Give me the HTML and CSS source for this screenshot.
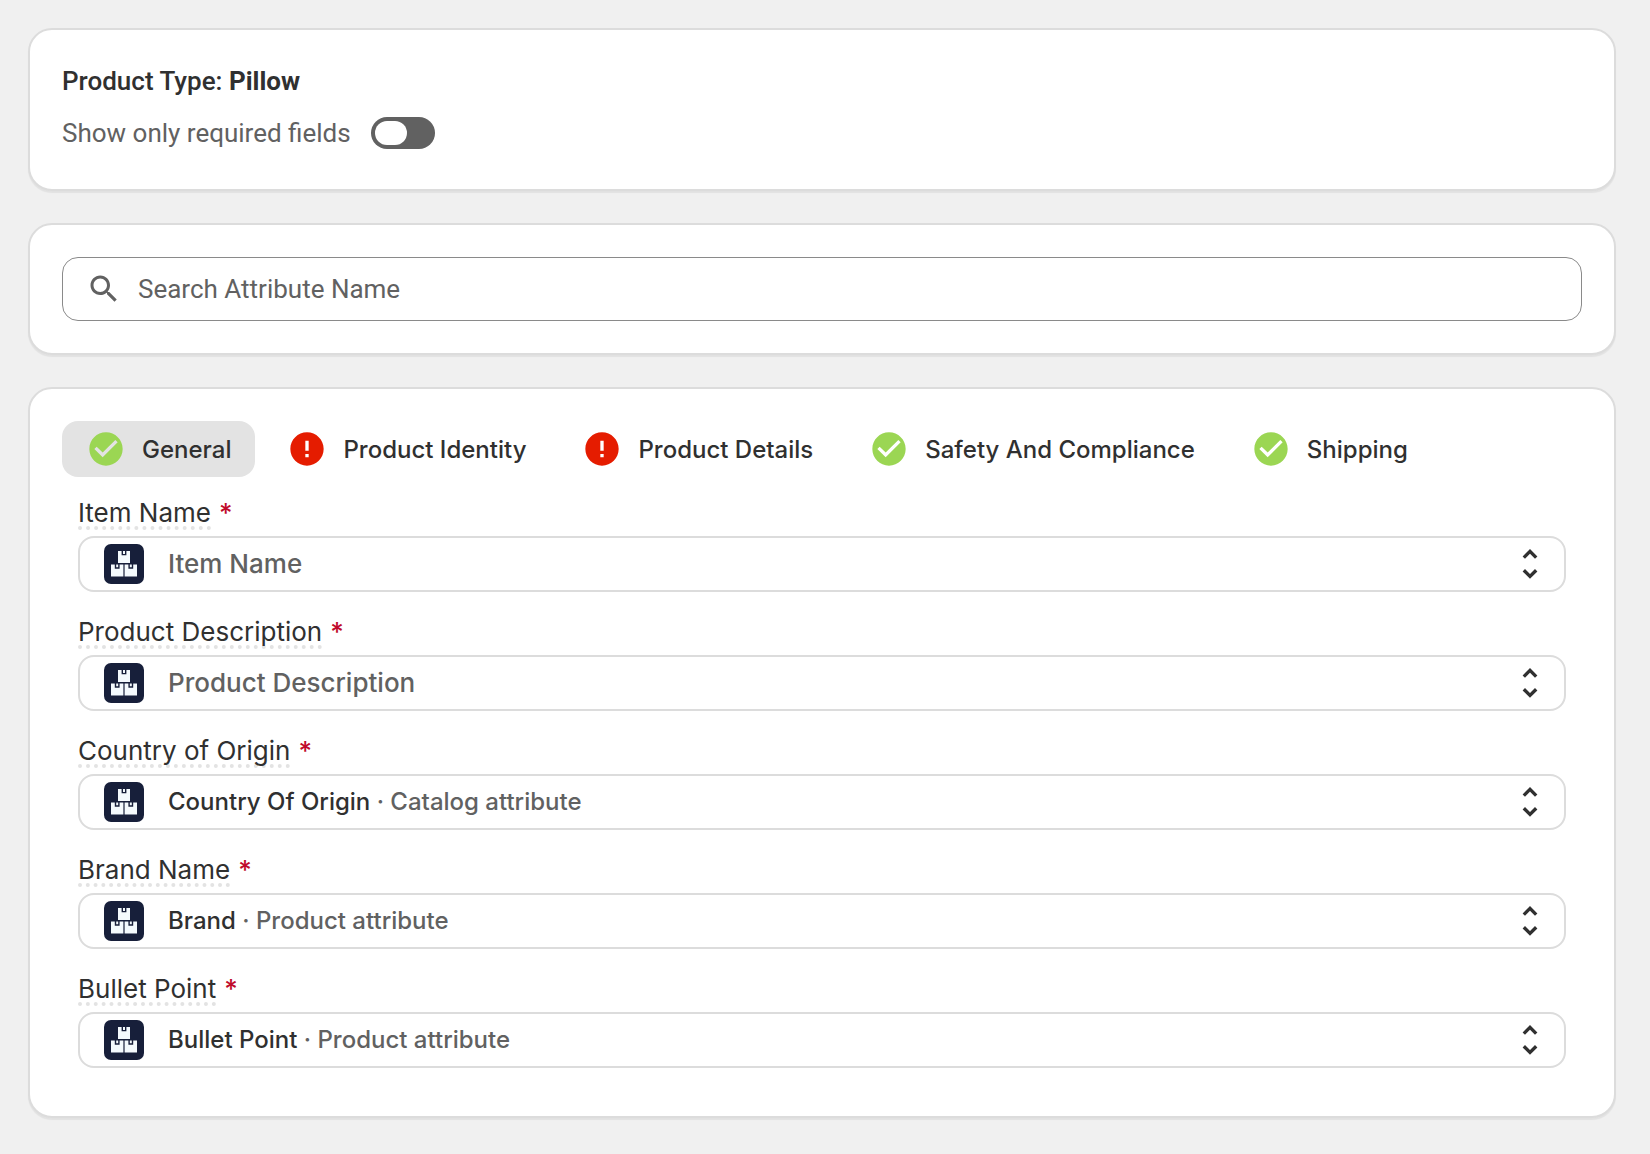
FILE: index.html
```html
<!DOCTYPE html>
<html lang="en">
<head>
    <meta charset="UTF-8">
    <meta name="viewport" content="width=device-width, initial-scale=1.0">
    <title>Product Attributes</title>
    <link rel="stylesheet" href="styles.css">
</head>
<body>

    <!-- shared icons -->
    <svg class="sprite" aria-hidden="true">
        <symbol id="icon-check" viewBox="0 0 24 24">
            <path d="M12 2C6.48 2 2 6.48 2 12s4.48 10 10 10 10-4.48 10-10S17.52 2 12 2zm-2 15l-5-5 1.41-1.41L10 14.17l7.59-7.59L19 8l-9 9z"/>
        </symbol>
        <symbol id="icon-error" viewBox="0 0 24 24">
            <path d="M12 2C6.48 2 2 6.48 2 12s4.48 10 10 10 10-4.48 10-10S17.52 2 12 2zm1 15h-2v-2h2v2zm0-4h-2V7h2v6z"/>
        </symbol>
        <symbol id="icon-boxes" viewBox="0 0 40 40">
            <rect width="40" height="40" rx="7" fill="#171f3a"/>
            <path d="M14 7h12v12H14zM7 20.4h12.4v12.2H7zM20.6 20.4H33v12.2H20.6z" fill="#f4fafd"/>
            <path d="M18.3 6.6v4h3.4v-4M11.5 20v4h3.4v-4M25.1 20v4h3.4v-4" fill="none" stroke="#171f3a" stroke-width="1.4"/>
        </symbol>
        <symbol id="icon-sort" viewBox="0 0 40 40">
            <path d="M13.8 13.6L20 7.4l6.2 6.2M13.8 26.2l6.2 6.2 6.2-6.2" fill="none" stroke="#303030" stroke-width="3.4"/>
        </symbol>
    </svg>

    <main class="page">
        <section class="card product">
            <h2 class="product-title">Product Type: <b>Pillow</b></h2>
            <div class="toggle-row">
                <label for="required-only">Show only required fields</label>
                <input type="checkbox" role="switch" id="required-only" class="toggle">
            </div>
        </section>

        <section class="card">
            <div class="search-box">
                <svg class="search-icon" viewBox="0 0 24 24" aria-hidden="true">
                    <path d="M15.5 14h-.79l-.28-.27C15.41 12.59 16 11.11 16 9.5 16 5.91 13.09 3 9.5 3S3 5.91 3 9.5 5.91 16 9.5 16c1.61 0 3.09-.59 4.23-1.57l.27.28v.79l5 4.99L20.49 19l-4.99-5zm-6 0C7.01 14 5 11.99 5 9.5S7.01 5 9.5 5 14 7.01 14 9.5 11.99 14 9.5 14z"/>
                </svg>
                <input type="search" class="search" placeholder="Search Attribute Name" aria-label="Search Attribute Name">
            </div>
        </section>

        <section class="card">
            <nav class="tabs">
                <button type="button" class="tab active"><svg class="icon ok"><use href="#icon-check"/></svg>General</button>
                <button type="button" class="tab"><svg class="icon error"><use href="#icon-error"/></svg>Product Identity</button>
                <button type="button" class="tab"><svg class="icon error"><use href="#icon-error"/></svg>Product Details</button>
                <button type="button" class="tab"><svg class="icon ok"><use href="#icon-check"/></svg>Safety And Compliance</button>
                <button type="button" class="tab"><svg class="icon ok"><use href="#icon-check"/></svg>Shipping</button>
            </nav>

            <form class="fields">
                <div class="field">
                    <div class="label-row">
                        <label for="item-name">Item Name</label><span class="star">*</span>
                    </div>
                    <div class="select">
                        <svg class="icon"><use href="#icon-boxes"/></svg>
                        <span class="placeholder" aria-hidden="true">Item Name</span>
                        <svg class="icon sort"><use href="#icon-sort"/></svg>
                        <select id="item-name" required>
                            <option value="">Item Name</option>
                        </select>
                    </div>
                </div>

                <div class="field">
                    <div class="label-row">
                        <label for="description">Product Description</label><span class="star">*</span>
                    </div>
                    <div class="select">
                        <svg class="icon"><use href="#icon-boxes"/></svg>
                        <span class="placeholder" aria-hidden="true">Product Description</span>
                        <svg class="icon sort"><use href="#icon-sort"/></svg>
                        <select id="description" required>
                            <option value="">Product Description</option>
                        </select>
                    </div>
                </div>

                <div class="field">
                    <div class="label-row">
                        <label for="country">Country of Origin</label><span class="star">*</span>
                    </div>
                    <div class="select">
                        <svg class="icon"><use href="#icon-boxes"/></svg>
                        <span class="value" aria-hidden="true">Country Of Origin <span class="source">· Catalog attribute</span></span>
                        <svg class="icon sort"><use href="#icon-sort"/></svg>
                        <select id="country" required>
                            <option>Country Of Origin · Catalog attribute</option>
                        </select>
                    </div>
                </div>

                <div class="field">
                    <div class="label-row">
                        <label for="brand">Brand Name</label><span class="star">*</span>
                    </div>
                    <div class="select">
                        <svg class="icon"><use href="#icon-boxes"/></svg>
                        <span class="value" aria-hidden="true">Brand <span class="source">· Product attribute</span></span>
                        <svg class="icon sort"><use href="#icon-sort"/></svg>
                        <select id="brand" required>
                            <option>Brand · Product attribute</option>
                        </select>
                    </div>
                </div>

                <div class="field">
                    <div class="label-row">
                        <label for="bullet">Bullet Point</label><span class="star">*</span>
                    </div>
                    <div class="select">
                        <svg class="icon"><use href="#icon-boxes"/></svg>
                        <span class="value" aria-hidden="true">Bullet Point <span class="source">· Product attribute</span></span>
                        <svg class="icon sort"><use href="#icon-sort"/></svg>
                        <select id="bullet" required>
                            <option>Bullet Point · Product attribute</option>
                        </select>
                    </div>
                </div>
            </form>
        </section>
    </main>

</body>
</html>
```
FILE: styles.css
```css
*{
    margin: 0;
    padding: 0;
    box-sizing: border-box;
}

body{
    background-color: #f0f0f0;
    color: #303030;
    font-family: Inter, "Liberation Sans", sans-serif;
    font-size: 26px;
}

button,input,select{
    font: inherit;
    color: inherit;
}

.sprite{
    display: none;
}

.page{
    display: flex;
    flex-direction: column;
    gap: 32px;
    padding: 28px 34px 36px 28px;
}

.card{
    padding: 32px;
    background-color: #fff;
    border: 2px solid #dcdcdc;
    border-radius: 24px;
    box-shadow: 0 2px 1px rgba(0, 0, 0, 0.06);
}

/* product type */
.product{
    display: flex;
    flex-direction: column;
    gap: 9px;
    font-family: Roboto, "Liberation Sans", sans-serif;
}

.product-title{
    font-size: 26px;
    line-height: 38px;
    font-weight: 500;
}

.product-title b{
    font-weight: 700;
}

.toggle-row{
    display: flex;
    align-items: center;
    gap: 20px;
    line-height: 48px;
    color: #616161;
}

.toggle{
    appearance: none;
    width: 64px;
    height: 32px;
    padding: 4px;
    background-color: #616161;
    border-radius: 16px;
    cursor: pointer;
}

.toggle::before{
    content: "";
    display: block;
    width: 32px;
    height: 24px;
    background-color: #fff;
    border-radius: 12px;
}

.toggle:checked::before{
    margin-left: auto;
}

/* search */
.search-box{
    display: flex;
    align-items: center;
    gap: 16px;
    height: 64px;
    padding: 0 23px;
    border: 1px solid #8a8a8a;
    border-radius: 16px;
}

.search-icon{
    flex: none;
    width: 36px;
    height: 36px;
    fill: #616161;
}

.search{
    flex: 1;
    min-width: 0;
    background: none;
    border: none;
    outline: none;
    font-family: Roboto, "Liberation Sans", sans-serif;
}

.search::placeholder{
    color: #616161;
}

/* tabs */
.tabs{
    display: flex;
    flex-wrap: wrap;
    gap: 8px;
}

.tab{
    display: flex;
    align-items: center;
    gap: 16px;
    height: 56px;
    padding: 0 24px;
    background: none;
    border: none;
    border-radius: 16px;
    font-size: 24px;
    font-weight: 500;
    cursor: pointer;
}

.tab.active{
    background-color: #e3e3e3;
}

.icon{
    flex: none;
    width: 40px;
    height: 40px;
}

.ok{
    fill: #9bd653;
}

.error{
    fill: #e51c00;
}

/* attribute fields */
.fields{
    display: flex;
    flex-direction: column;
    gap: 24px;
    padding: 20px 16px 16px;
}

.label-row{
    display: flex;
    gap: 8px;
    height: 39px;
    line-height: 32px;
}

.label-row label{
    height: 33px;
    border-bottom: 4px dotted #e3e3e3;
}

.star{
    color: #c00a2b;
    font-weight: 500;
}

.select{
    position: relative;
    display: flex;
    align-items: center;
    height: 56px;
    padding: 0 14px 0 24px;
    border: 2px solid #dcdcdc;
    border-radius: 16px;
    font-weight: 500;
}

.select:focus-within{
    border-color: #616161;
}

/* native select lies over the styled content */
.select select{
    position: absolute;
    inset: 0;
    width: 100%;
    height: 100%;
    opacity: 0;
    cursor: pointer;
}

.placeholder,.value{
    margin-left: 24px;
    padding-bottom: 2px;
}

.value{
    font-size: 24px;
}

.placeholder,.source{
    color: #616161;
}

.sort{
    margin-left: auto;
}

@media(max-width:600px){
    .page{
        padding: 16px;
    }
    .card{
        padding: 16px;
    }
    .fields{
        padding-inline: 0;
    }
}
```
